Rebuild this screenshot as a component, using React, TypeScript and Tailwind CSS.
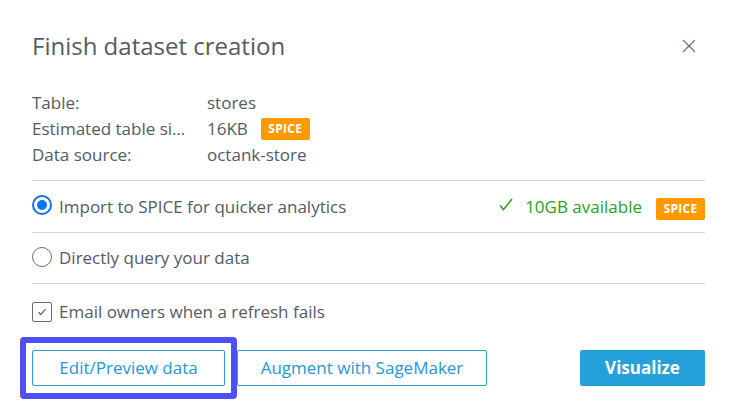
import { X } from "lucide-react";

const font = { fontFamily: "'Open Sans', 'Liberation Sans', sans-serif" };

function SpiceBadge() {
  return (
    <span className="inline-flex items-center justify-center h-[22px] w-[49px] rounded-[2px] bg-[#ff9900] text-white text-[12px] font-bold tracking-[0.3px]">
      SPICE
    </span>
  );
}

function InfoRow({ label, value, badge }: { label: string; value: string; badge?: boolean }) {
  return (
    <div className="flex items-center h-[26px]">
      <div className="w-[175px] pr-[17px] truncate">{label}</div>
      <div className="flex items-center gap-[13px]">
        <span>{value}</span>
        {badge && <SpiceBadge />}
      </div>
    </div>
  );
}

export default function App() {
  return (
    <div className="w-[736px] h-[414px] bg-white text-[#545b64] pl-8 pr-[31px] pt-[30px] overflow-hidden" style={font}>
      {/* Header */}
      <div className="flex items-center justify-between h-[32px]">
        <h1 className="text-[24px] leading-[32px] text-[#545b64]">Finish dataset creation</h1>
        <X className="h-[22px] w-[22px] text-[#687078] mr-[5px]" strokeWidth={1.3} />
      </div>

      {/* Table info */}
      <div className="mt-[28px] text-[17px]">
        <InfoRow label="Table:" value="stores" />
        <InfoRow label="Estimated table size:" value="16KB" badge />
        <InfoRow label="Data source:" value="octank-store" />
      </div>

      {/* Options */}
      <div className="mt-[12px] border-t border-[#d5d5d5] text-[17px]">
        <div className="flex items-center h-[52px] border-b border-[#d5d5d5]">
          <span className="h-[20px] w-[20px] rounded-full border-2 border-[#0a72f5] flex items-center justify-center -mt-[3px]">
            <span className="h-[10px] w-[10px] rounded-full bg-[#0a72f5]" />
          </span>
          <span className="ml-[7px]">Import to SPICE for quicker analytics</span>
          <div className="ml-auto flex items-center text-[#2ea01a]">
            <svg width="14" height="13" viewBox="0 0 14 13" className="-mt-[5px]">
              <path d="M1 7.5 L4.5 11.5 L13 1" fill="none" stroke="#2ea01a" strokeWidth="1.5" />
            </svg>
            <span className="ml-[12px]">10GB available</span>
            <span className="ml-[14px]">
              <SpiceBadge />
            </span>
          </div>
        </div>
        <div className="flex items-center h-[51px] border-b border-[#d5d5d5]">
          <span className="h-[20px] w-[20px] rounded-full border border-[#6b6b6b] -mt-[3px]" />
          <span className="ml-[7px]">Directly query your data</span>
        </div>
        <div className="flex items-center h-[56px]">
          <span className="h-[20px] w-[20px] rounded-[2px] border border-[#6b6b6b] flex items-center justify-center">
            <svg width="10" height="8" viewBox="0 0 10 8">
              <path d="M1.5 4.2 L3.8 6.6 L8.5 1.2" fill="none" stroke="#545b64" strokeWidth="1.2" />
            </svg>
          </span>
          <span className="ml-[7px]">Email owners when a refresh fails</span>
        </div>
      </div>

      {/* Actions */}
      <div className="flex items-center -ml-[12px] mt-[-3px] text-[17px]">
        <div className="border-[6px] border-[#4f4ff5] rounded-[4px] px-[6px] py-[7px] bg-white">
          <button className="h-[36px] w-[193px] border border-[#2aa0d8] rounded-[2px] text-[#1f98d3] font-medium">
            Edit/Preview data
          </button>
        </div>
        <button className="h-[36px] w-[250px] border border-[#2aa0d8] rounded-[2px] text-[#1f98d3] font-medium">
          Augment with SageMaker
        </button>
        <button className="ml-auto h-[36px] w-[125px] bg-[#24a0da] rounded-[2px] text-white font-bold">
          Visualize
        </button>
      </div>
    </div>
  );
}
